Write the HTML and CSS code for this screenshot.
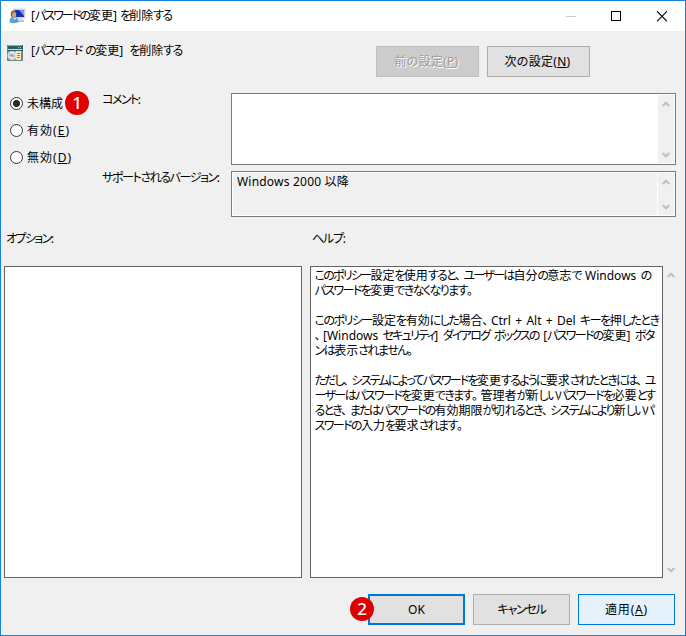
FILE: index.html
```html
<!DOCTYPE html>
<html lang="ja">
<head>
<meta charset="utf-8">
<title>[パスワードの変更] を削除する</title>
<link rel="stylesheet" href="styles.css">
</head>
<body>
<div class="window">
  <header class="titlebar">
    <svg class="title-icon" width="17" height="16" viewBox="0 0 17 16">
      <rect x="4.500" y="1" width="11.500" height="9" fill="#d5dbe2" stroke="#b9c1cb" stroke-width="0.6"/>
      <rect x="5.500" y="2" width="9.500" height="7" fill="#1a2fb8"/>
      <path d="M10 2h5v6z" fill="#8296ee"/>
      <path d="M9 10h5l1 3H8z" fill="#dde1e6"/>
      <path d="M8 12.500h7v1.500H8z" fill="#b4bcc5"/>
      <path d="M0.500 14c0-4 1.500-5 4.500-5s4.500 2 4.500 5c-2 1.500-7 1.500-9 0z" fill="#5b9fd4"/>
      <ellipse cx="4.500" cy="6" rx="2.800" ry="3.600" fill="#7b6a55"/>
      <ellipse cx="5.200" cy="7" rx="1.900" ry="2.800" fill="#d0a674"/>
      <path d="M4 10l2 2 1-2z" fill="#eef6fc"/>
    </svg>
    <span class="fit" data-width="140">[パスワードの変更] を削除する</span>
    <svg class="controls" width="101" height="11" viewBox="0 0 101 11" fill="none" stroke="#000">
      <path d="M0 5.5h10" stroke="#ccc"/>
      <rect x="45.500" y="0.500" width="9" height="9"/>
      <path d="M91 0.300l10 10M101 0.300l-10 10" stroke-width="1.100"/>
    </svg>
  </header>

  <section class="setting">
    <svg class="setting-icon" width="16" height="16" viewBox="0 0 16 16">
      <rect width="16" height="16" fill="#72858a"/>
      <path d="M1 0h15v6H1z" fill="#2f5f6b"/>
      <path d="M1 0h14v1H1z" fill="#93a5a5"/>
      <path d="M2 2h8v1H2z" fill="#274a7c"/>
      <path d="M11 2h1v1h-1zM13 2h1v1h-1z" fill="#efb85a"/>
      <path d="M1 4h14v1H1z" fill="#d3d7d2"/>
      <circle cx="5" cy="10.500" r="4.500" fill="#dfe3e4"/>
      <path d="M5 10.500L2 7.500v4z" fill="#a9cbbd"/>
      <path d="M5 10.500L8 13v-4z" fill="#c9bfe0"/>
      <circle cx="5" cy="10.500" r="1.200" fill="#8c979a"/>
      <rect x="8.500" y="6" width="5.500" height="9" fill="#f6e9bb"/>
      <path d="M10 8.500h3M10 10.500h3M10 12.500h3" stroke="#9c8650"/>
    </svg>
    <h1 class="fit" data-width="151">[パスワード の変更]&nbsp; を削除する</h1>
    <div class="nav">
      <button class="btn nav-btn" disabled><span class="fit" data-width="64">前の設定(<u>P</u>)</span></button>
      <button class="btn nav-btn"><span class="fit" data-width="66">次の設定(<u>N</u>)</span></button>
    </div>
  </section>

  <section class="state">
    <div class="radios">
      <div class="radio"><i class="dot on"></i><span>未構成</span><b class="badge one">1</b></div>
      <div class="radio"><i class="dot"></i><span class="fit" data-width="43">有効(<u>E</u>)</span></div>
      <div class="radio"><i class="dot"></i><span class="fit" data-width="45">無効(<u>D</u>)</span></div>
    </div>
    <div class="fields">
      <label><span class="fit" data-width="39">コメント:</span></label>
      <div class="field comment">
        <div class="track">
          <svg width="8" height="6" viewBox="0 0 8 6"><path d="M.7 5L4 1.700 7.300 5"/></svg>
          <svg width="8" height="6" viewBox="0 0 8 6"><path d="M.7 1L4 4.300 7.300 1"/></svg>
        </div>
      </div>
      <label><span class="fit" data-width="118">サポートされるバージョン:</span></label>
      <div class="field version">
        <p class="fit" data-width="112">Windows 2000 以降</p>
        <div class="track">
          <svg width="8" height="6" viewBox="0 0 8 6"><path d="M.7 5L4 1.700 7.300 5"/></svg>
          <svg width="8" height="6" viewBox="0 0 8 6"><path d="M.7 1L4 4.300 7.300 1"/></svg>
        </div>
      </div>
    </div>
  </section>

  <section class="panels">
    <h2><span class="fit" data-width="48">オプション:</span></h2>
    <h2 class="help-title"><span class="fit" data-width="34">ヘルプ:</span></h2>
    <div class="panel"></div>
    <div class="panel help">
      <p class="fit" data-width="336">このポリシー設定を使用すると、ユーザーは自分の意志で Windows の</p>
      <p class="fit" data-width="161">パスワードを変更できなくなります。</p>
      <p class="gap fit" data-width="344">このポリシー設定を有効にした場合、Ctrl + Alt + Del キーを押したとき</p>
      <p class="fit" data-width="339">、[Windows セキュリティ] ダイアログ ボックスの [パスワードの変更] ボタ</p>
      <p class="fit" data-width="101">ンは表示されません。</p>
      <p class="gap fit" data-width="340">ただし、システムによってパスワードを変更するように要求されたときには、ユ</p>
      <p class="fit" data-width="340">ーザーはパスワードを変更できます。管理者が新しいパスワードを必要とす</p>
      <p class="fit" data-width="339">るとき、またはパスワードの有効期限が切れるとき、システムにより新しいパ</p>
      <p class="fit" data-width="151">スワードの入力を要求されます。</p>
    </div>
    <div class="track outer">
      <svg width="8" height="6" viewBox="0 0 8 6"><path d="M.7 5L4 1.700 7.300 5"/></svg>
      <svg width="8" height="6" viewBox="0 0 8 6"><path d="M.7 1L4 4.300 7.300 1"/></svg>
    </div>
  </section>

  <footer class="actions">
    <button class="btn default">OK<b class="badge two">2</b></button>
    <button class="btn"><span class="fit" data-width="48">キャンセル</span></button>
    <button class="btn hot"><span class="fit" data-width="43">適用(<u>A</u>)</span></button>
  </footer>
</div>
<script src="fit.js"></script>
</body>
</html>
```
FILE: styles.css
```css
* { box-sizing: border-box; }
body {
  margin: 0;
  font: 12px/15px "Noto Sans", "Noto Sans CJK JP", sans-serif;
  font-feature-settings: "palt";
  color: #000;
}
h1, h2, p { margin: 0; font: inherit; }
u { text-underline-offset: 1px; text-decoration-thickness: 1px; }
.fit { white-space: pre; }
.punct { letter-spacing: 2.5px; }

.window {
  width: 686px;
  height: 636px;
  border: 1px solid #1883d7;
  background: #f0f0f0;
  display: flex;
  flex-direction: column;
  overflow: hidden;
}
.titlebar {
  height: 30px;
  background: #fff;
  display: flex;
  align-items: center;
  padding: 0 18px 1px 8px;
}
.title-icon { margin-right: 5px; }
.controls { margin: 1px 0 0 auto; }

.setting {
  height: 62px;
  display: flex;
  align-items: flex-start;
  padding: 14px 95px 0 6px;
}
.setting-icon { margin-right: 8px; }
.setting h1 { margin-top: -2px; }
.nav { display: flex; gap: 8px; margin: 1px 0 0 auto; }
.btn {
  position: relative;
  width: 97px;
  height: 31px;
  padding: 0;
  border: 1px solid #adadad;
  background: #e1e1e1;
  color: #000;
  font: inherit;
  font-feature-settings: inherit;
}
.nav-btn { width: 103px; padding-right: 2px; }
.btn:disabled {
  background: #ccc;
  border-color: #bfbfbf;
  color: #9b9b9b;
  text-shadow: 1px 1px #fff;
}

.state { display: flex; height: 124px; }
.radios { width: 101px; padding: 2px 0 0 9px; }
.radio { position: relative; display: flex; align-items: center; gap: 4px; height: 17px; margin-bottom: 10px; }
.dot {
  width: 13px;
  height: 13px;
  border: 1px solid #333;
  border-radius: 50%;
  background: #fff;
}
.dot.on { background: radial-gradient(circle, #2b2b2b 3.200px, #fff 3.900px); }
.badge {
  position: absolute;
  width: 24px;
  height: 24px;
  border-radius: 50%;
  background: #df0000;
  color: #fff;
  font: 500 17px/24px "Noto Sans", sans-serif;
  text-align: center;
}
.badge.one { left: 55px; top: -4px; }
.badge.two { left: -20px; top: 1px; }

.fields {
  display: grid;
  grid-template-columns: 129px 445px;
  grid-template-rows: 72px 46px;
  row-gap: 6px;
}
.fields label { margin-top: -1px; }
.field {
  border: 1px solid #7a7a7a;
  padding: 1px;
  background: #fff;
  display: flex;
}
.version p { flex: 1; padding: 1px 0 0 4px; background: #f0f0f0; border-right: 1px solid #fff; }
.track {
  width: 16px;
  margin-left: auto;
  background: #f0f0f0;
  display: flex;
  flex-direction: column;
  align-items: center;
  justify-content: space-between;
  padding: 6px 0 5px;
}
.track path { fill: none; stroke: #bfbfbf; stroke-width: 2; }

.panels {
  display: grid;
  grid-template-columns: 298px 353px 16px;
  grid-template-rows: 35px 312px;
  column-gap: 8px;
  margin: 14px 0 0 3px;
}
.panels h2 { padding-left: 2px; }
.panels .help-title { grid-column: 2 / 4; }
.panel { background: #fff; border: 1px solid #646464; }
.help { padding: 1px 0 0 3.5px; word-spacing: 1.2px; }
.gap { margin-top: 15px; }
.outer { margin-left: -8px; }

.actions { display: flex; justify-content: flex-end; gap: 8px; margin: 16px 10px 0 0; }
.btn.default { border: 2px solid #0078d7; }
.btn.hot { border-color: #0078d7; background: #e5f1fb; }
```
FILE: fit.js
```js
const RUNS = /([\u3001\u3002]|[\u3040-\u30ff]+)/;

function wrapKana(node, out) {
  for (const child of [...node.childNodes]) {
    if (child.nodeType !== 3) { wrapKana(child, out); continue; }
    const parts = child.data.split(RUNS).filter(Boolean).map(text => {
      if (!RUNS.test(text)) return document.createTextNode(text);
      const span = document.createElement('span');
      span.textContent = text;
      if (/[\u3001\u3002]/.test(text)) span.className = 'punct';
      else out.push(span);
      return span;
    });
    child.replaceWith(...parts);
  }
}

function fit() {
  for (const line of document.querySelectorAll('.fit')) {
    const kana = [];
    wrapKana(line, kana);
    const range = document.createRange();
    range.selectNodeContents(line);
    const natural = range.getBoundingClientRect().width;
    const extra = Number(line.dataset.width) - natural;
    const count = kana.reduce((n, s) => n + s.textContent.length, 0);
    if (count > 1) {
      for (const s of kana) s.style.letterSpacing = (extra / count) + 'px';
    } else {
      line.style.letterSpacing = (extra / line.textContent.length) + 'px';
    }
  }
}
fit();
```
